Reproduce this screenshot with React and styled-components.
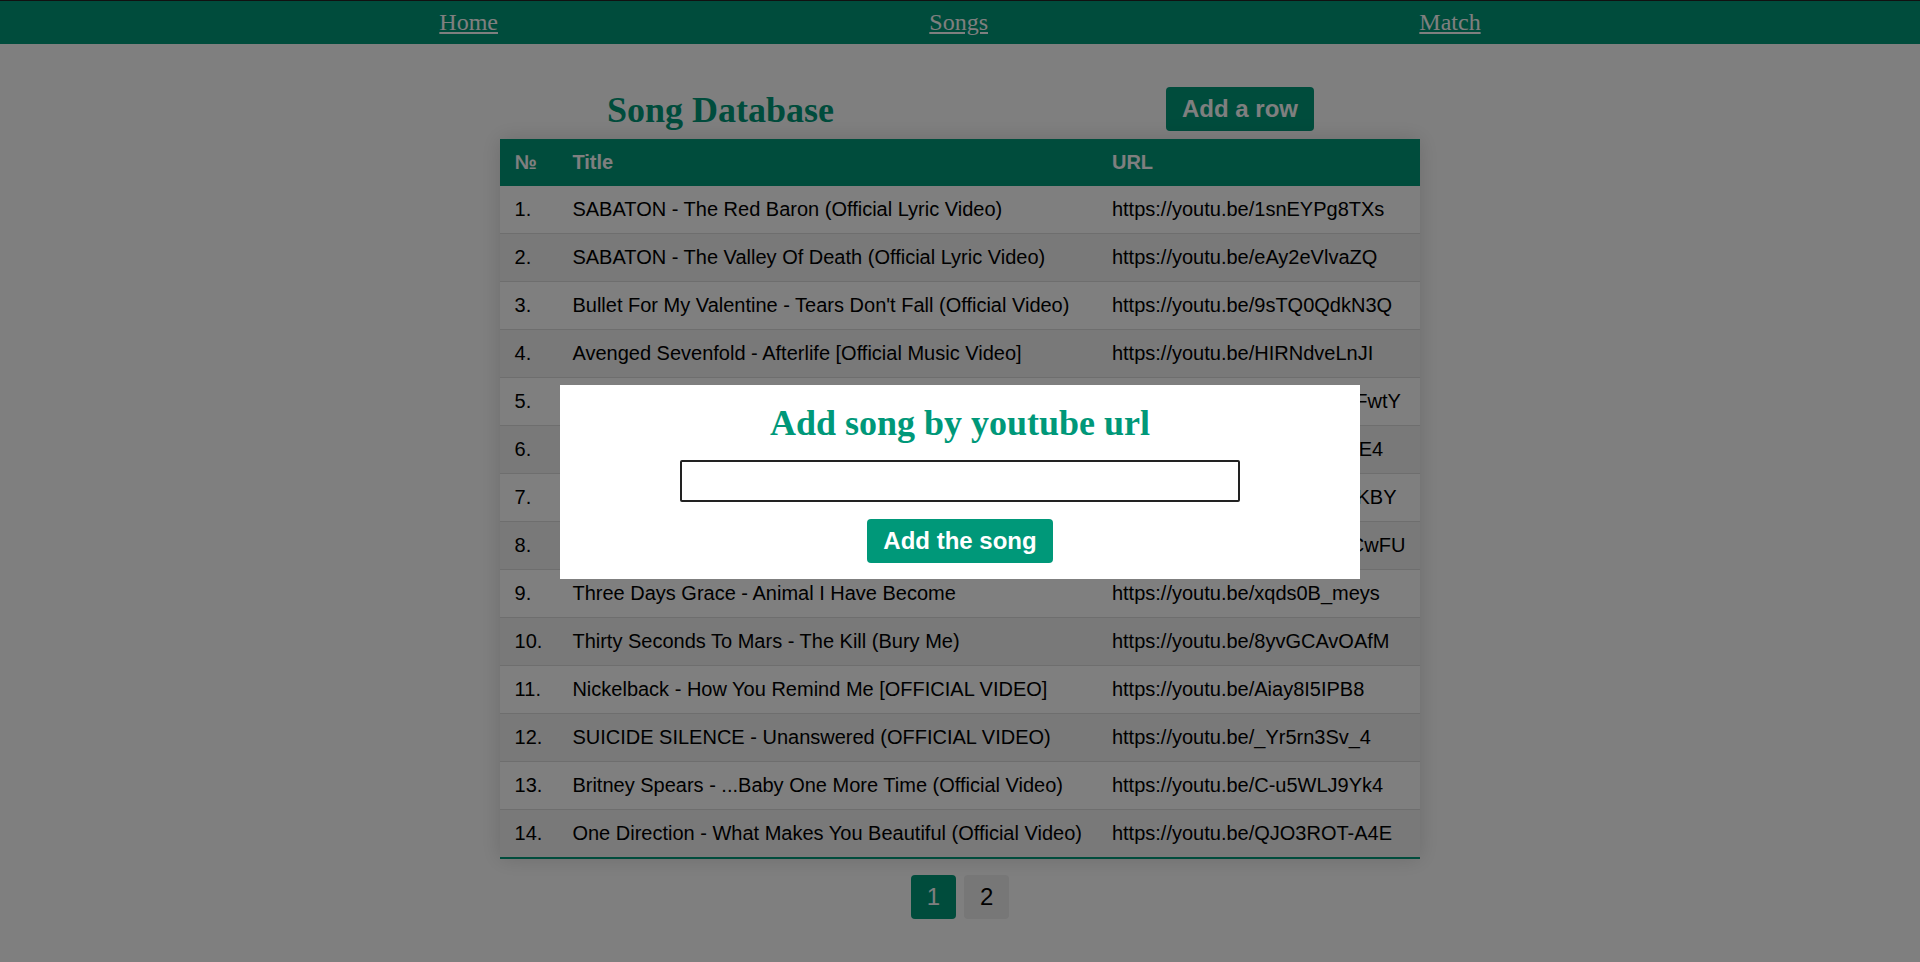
import styled, { createGlobalStyle } from "styled-components";

const songs = [
  ["SABATON - The Red Baron (Official Lyric Video)", "https://youtu.be/1snEYPg8TXs"],
  ["SABATON - The Valley Of Death (Official Lyric Video)", "https://youtu.be/eAy2eVlvaZQ"],
  ["Bullet For My Valentine - Tears Don't Fall (Official Video)", "https://youtu.be/9sTQ0QdkN3Q"],
  ["Avenged Sevenfold - Afterlife [Official Music Video]", "https://youtu.be/HIRNdveLnJI"],
  ["Disturbed - The Sound Of Silence [Official Music Video]", "https://youtu.be/WDMkNO4FwtY"],
  ["Linkin Park - Numb (Official Music Video)", "https://youtu.be/aX7UbqLzpE4"],
  ["Breaking Benjamin - The Diary of Jane (Official Video)", "https://youtu.be/DwaB4PsCKBY"],
  ["Skillet - Monster (Official Video)", "https://youtu.be/VMKdQHaCwFU"],
  ["Three Days Grace - Animal I Have Become", "https://youtu.be/xqds0B_meys"],
  ["Thirty Seconds To Mars - The Kill (Bury Me)", "https://youtu.be/8yvGCAvOAfM"],
  ["Nickelback - How You Remind Me [OFFICIAL VIDEO]", "https://youtu.be/Aiay8I5IPB8"],
  ["SUICIDE SILENCE - Unanswered (OFFICIAL VIDEO)", "https://youtu.be/_Yr5rn3Sv_4"],
  ["Britney Spears - ...Baby One More Time (Official Video)", "https://youtu.be/C-u5WLJ9Yk4"],
  ["One Direction - What Makes You Beautiful (Official Video)", "https://youtu.be/QJO3ROT-A4E"],
];

const GlobalStyle = createGlobalStyle`
  body {
    margin: 0;
    background: #ffffff;
    font-family: "Liberation Serif", "Times New Roman", serif;
  }
`;

const Nav = styled.nav`
  display: flex;
  justify-content: space-evenly;
  align-items: center;
  background: #009879;
  border-top: 1px solid #222;
  padding: 8px 8px;
`;

const NavLink = styled.a`
  color: #ffffff;
  font-size: 24px;
  text-decoration: underline;
`;

const Main = styled.main`
  display: flex;
  flex-direction: column;
  align-items: center;
  padding-top: 43px;
`;

const TopBar = styled.div`
  width: 920px;
  box-sizing: border-box;
  padding: 0 106px 0 107px;
  display: flex;
  justify-content: space-between;
  align-items: flex-start;
  margin-bottom: 8px;
`;

const Title = styled.h1`
  margin: 2px 0 0;
  font-size: 36px;
  font-weight: bold;
  color: #009879;
`;

const Button = styled.button`
  background: #009879;
  color: #ffffff;
  border: none;
  border-radius: 4px;
  padding: 8px 16px;
  font-family: "Liberation Sans", Arial, sans-serif;
  font-size: 24px;
  font-weight: bold;
  line-height: 1.15;
  cursor: pointer;
`;

const Table = styled.table`
  border-collapse: collapse;
  font-family: "Liberation Sans", Arial, sans-serif;
  font-size: 20px;
  box-shadow: 0 0 20px rgba(0, 0, 0, 0.15);

  th, td {
    padding: 12px 15px;
    text-align: left;
    white-space: nowrap;
  }

  thead tr {
    background: #009879;
    color: #ffffff;
  }

  tbody tr {
    border-bottom: 1px solid #dddddd;
  }

  tbody tr:nth-of-type(even) {
    background: #f3f3f3;
  }

  tbody tr:last-of-type {
    border-bottom: 2px solid #009879;
  }
`;

const Pager = styled.div`
  display: flex;
  gap: 8px;
  margin-top: 16px;
`;

const PageButton = styled.button`
  border: none;
  border-radius: 4px;
  padding: 8px 16px;
  font-family: "Liberation Sans", Arial, sans-serif;
  font-size: 24px;
  line-height: 1.15;
  background: ${(p) => (p.$active ? "#009879" : "#eeeeee")};
  color: ${(p) => (p.$active ? "#ffffff" : "#000000")};
`;

const Overlay = styled.div`
  position: fixed;
  inset: 0;
  background: rgba(0, 0, 0, 0.5);
  display: flex;
  align-items: center;
  justify-content: center;
`;

const Modal = styled.div`
  width: 800px;
  margin-top: 2px;
  background: #ffffff;
  display: flex;
  flex-direction: column;
  align-items: center;
  gap: 17px;
  padding: 17px 0 16px;
`;

const ModalTitle = styled.h2`
  margin: 0 0 -1px;
  font-size: 36px;
  font-weight: bold;
  color: #009879;
`;

const UrlInput = styled.input`
  width: 560px;
  height: 42px;
  box-sizing: border-box;
  border: 2px solid #222;
  border-radius: 2px;
  font-size: 20px;
  padding: 0 8px;
`;

export default function App() {
  return (
    <>
      <GlobalStyle />
      <Nav>
        <NavLink href="#">Home</NavLink>
        <NavLink href="#">Songs</NavLink>
        <NavLink href="#">Match</NavLink>
      </Nav>
      <Main>
        <TopBar>
          <Title>Song Database</Title>
          <Button>Add a row</Button>
        </TopBar>
        <Table>
          <thead>
            <tr>
              <th>№</th>
              <th>Title</th>
              <th>URL</th>
            </tr>
          </thead>
          <tbody>
            {songs.map(([title, url], i) => (
              <tr key={url}>
                <td>{i + 1}.</td>
                <td>{title}</td>
                <td>{url}</td>
              </tr>
            ))}
          </tbody>
        </Table>
        <Pager>
          <PageButton $active>1</PageButton>
          <PageButton>2</PageButton>
        </Pager>
      </Main>
      <Overlay>
        <Modal>
          <ModalTitle>Add song by youtube url</ModalTitle>
          <UrlInput type="text" />
          <Button>Add the song</Button>
        </Modal>
      </Overlay>
    </>
  );
}
